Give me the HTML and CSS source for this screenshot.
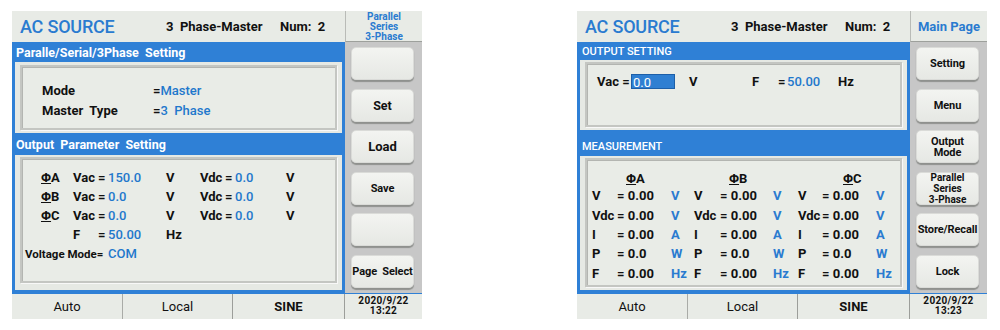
FILE: index.html
```html
<!DOCTYPE html>
<html lang="en">
<head>
  <meta charset="UTF-8">
  <title>AC Source - Panel Screens</title>
  <link rel="stylesheet" href="styles.css">
</head>
<body>
  <div class="screens">

    <!-- Parallel / Series / 3-Phase page -->
    <div class="panel">
      <div class="top">
        <span class="brand">AC SOURCE</span>
        <span class="mode">3&nbsp; Phase-Master</span>
        <span class="num">Num:&nbsp; 2</span>
      </div>
      <div class="side-top small">Parallel<br>Series<br>3-Phase</div>

      <div class="screen">
        <div class="sec-title">Paralle/Serial/3Phase&nbsp; Setting</div>
        <div class="sec-body sb-mode">
          <div class="inset grid-mode">
            <span class="lbl">Mode</span><span class="val"><b>=</b>Master</span>
            <span class="lbl">Master&nbsp; Type</span><span class="val"><b>=</b>3&nbsp; Phase</span>
          </div>
        </div>
        <div class="sec-title st-2">Output&nbsp; Parameter&nbsp; Setting</div>
        <div class="sec-body sb-param">
          <div class="inset grid-param">
            <span></span><span class="phi"><u>Φ</u>A</span><span class="lbl">Vac</span><span class="lbl">=</span><span class="val">150.0</span><span class="lbl">V</span><span class="lbl">Vdc</span><span class="lbl">=</span><span class="val">0.0</span><span class="lbl">V</span>
            <span></span><span class="phi"><u>Φ</u>B</span><span class="lbl">Vac</span><span class="lbl">=</span><span class="val">0.0</span><span class="lbl">V</span><span class="lbl">Vdc</span><span class="lbl">=</span><span class="val">0.0</span><span class="lbl">V</span>
            <span></span><span class="phi"><u>Φ</u>C</span><span class="lbl">Vac</span><span class="lbl">=</span><span class="val">0.0</span><span class="lbl">V</span><span class="lbl">Vdc</span><span class="lbl">=</span><span class="val">0.0</span><span class="lbl">V</span>
            <span></span><span></span><span class="lbl">F</span><span class="lbl">=</span><span class="val">50.00</span><span class="lbl">Hz</span><span class="fill"></span>
            <span class="lbl vmode">Voltage Mode=</span><span class="val">COM</span><span class="fill"></span>
          </div>
        </div>
      </div>

      <div class="side">
        <div class="btn"></div>
        <div class="btn">Set</div>
        <div class="btn big">Load</div>
        <div class="btn sm">Save</div>
        <div class="btn"></div>
        <div class="btn sm">Page&nbsp; Select</div>
      </div>

      <div class="foot">
        <span>Auto</span>
        <span>Local</span>
        <span class="bold">SINE</span>
      </div>
      <div class="side-foot">2020/9/22<br>13:22</div>
    </div>

    <!-- Main page -->
    <div class="panel">
      <div class="top">
        <span class="brand">AC SOURCE</span>
        <span class="mode">3&nbsp; Phase-Master</span>
        <span class="num">Num:&nbsp; 2</span>
      </div>
      <div class="side-top">Main Page</div>

      <div class="screen">
        <div class="sec-title caps">OUTPUT SETTING</div>
        <div class="sec-body sb-out">
          <div class="inset out-row">
            <span class="lbl w-vac">Vac =</span>
            <span class="input">0.0</span>
            <span class="lbl w-v">V</span>
            <span class="lbl w-f">F</span>
            <span class="lbl w-eq">=</span>
            <span class="val w-hz">50.00</span>
            <span class="lbl">Hz</span>
          </div>
        </div>
        <div class="sec-title caps st-meas">MEASUREMENT</div>
        <div class="sec-body sb-meas">
          <div class="inset grid-meas">
            <span></span><span class="phi ph-a"><u>Φ</u>A</span><span></span><span></span><span class="phi ph-b"><u>Φ</u>B</span><span></span><span></span><span class="phi ph-c"><u>Φ</u>C</span><span></span>

            <span class="lbl">V</span><span class="lbl">= 0.00</span><span class="unit">V</span><span class="lbl">V</span><span class="lbl">= 0.00</span><span class="unit">V</span><span class="lbl">V</span><span class="lbl">= 0.00</span><span class="unit">V</span>
            <span class="lbl">Vdc</span><span class="lbl">= 0.00</span><span class="unit">V</span><span class="lbl">Vdc</span><span class="lbl">= 0.00</span><span class="unit">V</span><span class="lbl">Vdc</span><span class="lbl">= 0.00</span><span class="unit">V</span>
            <span class="lbl">I</span><span class="lbl">= 0.00</span><span class="unit">A</span><span class="lbl">I</span><span class="lbl">= 0.00</span><span class="unit">A</span><span class="lbl">I</span><span class="lbl">= 0.00</span><span class="unit">A</span>
            <span class="lbl">P</span><span class="lbl">= 0.0</span><span class="unit">W</span><span class="lbl">P</span><span class="lbl">= 0.0</span><span class="unit">W</span><span class="lbl">P</span><span class="lbl">= 0.0</span><span class="unit">W</span>
            <span class="lbl">F</span><span class="lbl">= 0.00</span><span class="unit">Hz</span><span class="lbl">F</span><span class="lbl">= 0.00</span><span class="unit">Hz</span><span class="lbl">F</span><span class="lbl">= 0.00</span><span class="unit">Hz</span>
          </div>
        </div>
      </div>

      <div class="side">
        <div class="btn sm">Setting</div>
        <div class="btn sm">Menu</div>
        <div class="btn sm tight">Output<br>Mode</div>
        <div class="btn xs tight">Parallel<br>Series<br>3-Phase</div>
        <div class="btn sm">Store/Recall</div>
        <div class="btn sm">Lock</div>
      </div>

      <div class="foot">
        <span>Auto</span>
        <span>Local</span>
        <span class="bold">SINE</span>
      </div>
      <div class="side-foot">2020/9/22<br>13:23</div>
    </div>

  </div>
</body>
</html>
```

FILE: styles.css
```css
* {
  margin: 0;
  padding: 0;
  box-sizing: border-box;
}

body {
  font-family: Roboto, 'Liberation Sans', Arial, sans-serif;
  background: #ffffff;
  color: #111;
}

.screens {
  display: flex;
  gap: 155px;
  padding: 11px 0 0 12px;
}

.panel {
  display: grid;
  grid-template-columns: 333px 77px;
  grid-template-rows: 31px 251px 26px;
  width: 410px;
  background: #e8ebe6;
}

/* header row */
.top {
  display: flex;
  align-items: center;
  padding-left: 8px;
  background: #e8ebe6;
}

.brand {
  color: #2a7bd0;
  font-size: 18px;
  font-weight: 500;
  width: 146px;
  letter-spacing: -0.2px;
}

.mode {
  font-size: 13px;
  font-weight: 700;
  width: 114px;
}

.num {
  font-size: 13px;
  font-weight: 700;
}

.side-top {
  display: flex;
  align-items: center;
  justify-content: center;
  text-align: center;
  color: #2a7bd0;
  font-size: 13px;
  font-weight: 700;
  border-left: 1px solid #b9bbb7;
  border-bottom: 1px solid #9da09c;
  background: #e8ebe6;
}

.side-top.small {
  font-size: 10px;
  line-height: 10px;
  padding-top: 1px;
}

/* blue working area */
.screen {
  background: #2f80d6;
  padding: 0 3px 3px 3px;
  display: flex;
  flex-direction: column;
}

.sec-title {
  height: 20px;
  line-height: 21px;
  color: #fff;
  font-size: 12.5px;
  font-weight: 700;
  padding-left: 1px;
}

.sec-title.st-2 {
  height: 22px;
  line-height: 24px;
}

.sec-title.caps {
  font-size: 11px;
  font-weight: 500;
  padding-left: 2px;
  height: 18px;
  line-height: 20px;
}

.sec-title.st-meas {
  margin-top: 6px;
  height: 20px;
  line-height: 22px;
}

.sec-body {
  background: #e6e9e4;
  padding: 3px 5px;
}

.sb-mode { height: 71px; }
.sb-param { height: 135px; padding: 2px 5px 7px; }
.sb-out { height: 70px; padding: 2px 5px 3px; }
.sb-meas { flex: 1; padding: 2px 5px 3px; }

.inset {
  height: 100%;
  background: #e9ece7;
  border: 2px solid #c4c6c2;
  box-shadow: inset 1px 1px 0 #b3b5b1, 1px 1px 0 #f8f8f8;
}

.lbl {
  font-size: 13px;
  font-weight: 700;
  white-space: nowrap;
}

.val {
  font-size: 13px;
  font-weight: 500;
  color: #1f78cc;
  white-space: nowrap;
}

.val b {
  color: #111;
  font-weight: 700;
}

.unit {
  font-size: 13px;
  font-weight: 700;
  color: #2a7bd0;
}

.phi {
  font-size: 13px;
  font-weight: 700;
}

.phi u {
  text-decoration-thickness: 1px;
  text-underline-offset: 1px;
}

/* mode box */
.grid-mode {
  display: grid;
  grid-template-columns: 111px auto;
  grid-auto-rows: 20px;
  align-items: center;
  padding: 13px 0 0 20px;
}

/* output parameter box */
.grid-param {
  display: grid;
  grid-template-columns: 16px 32px 25px 10px 58px 34px 25px 10px 51px auto;
  grid-auto-rows: 19px;
  align-items: center;
  padding: 9px 0 0 3px;
}

.grid-param .fill {
  grid-column: span 4;
}

.grid-param .vmode {
  grid-column: span 4;
  font-size: 11.5px;
}

/* output setting row */
.out-row {
  display: flex;
  align-items: flex-start;
  padding: 10px 0 0 10px;
}

.w-vac { width: 34px; }
.w-v { width: 77px; padding-left: 14px; }
.w-f { width: 26px; }
.w-eq { width: 9px; }
.w-hz { width: 51px; }

.input {
  width: 44px;
  height: 15px;
  line-height: 15px;
  background: #2f7fd2;
  color: #fff;
  font-size: 13px;
  padding-left: 1px;
  border: 1px solid #1d5fa8;
}

/* measurement table */
.grid-meas {
  display: grid;
  grid-template-columns: 25px 54px 23px 26px 53px 25px 24px 54px auto;
  grid-template-rows: 15px;
  grid-auto-rows: 19.4px;
  align-items: center;
  padding: 11px 0 0 5px;
}

.ph-a { padding-left: 9px; }
.ph-b { padding-left: 9px; }
.ph-c { padding-left: 21px; }

/* soft key column */
.side {
  background: #c7c7c7;
  display: flex;
  flex-direction: column;
  gap: 8.6px;
  padding: 5px 8px 5px 6px;
}

.btn {
  height: 33px;
  border-radius: 5px;
  background: linear-gradient(#f3f4f1, #e6e8e4);
  border: 1px solid #dadbd8;
  box-shadow: 0 2px 1px #8f918e;
  display: flex;
  align-items: center;
  justify-content: center;
  text-align: center;
  font-size: 12.5px;
  font-weight: 700;
  white-space: nowrap;
}

.btn.big { font-size: 13px; }
.btn.sm { font-size: 11px; letter-spacing: -0.1px; }
.btn.xs { font-size: 10px; line-height: 9px; }
.btn.tight { line-height: 11px; }

/* status bar */
.foot {
  display: grid;
  grid-template-columns: 111px 110px 112px;
  border-top: 1px solid #2f80d6;
  background: #e8ebe6;
}

.foot span {
  display: flex;
  align-items: center;
  justify-content: center;
  font-size: 13px;
  border-right: 1px solid #9c9e9a;
}

.foot span:first-child {
  border-right-color: #a9aba7;
}

.foot .bold {
  font-weight: 700;
}

.side-foot {
  border-top: 1px solid #2f80d6;
  background: #e8ebe6;
  font-size: 10px;
  font-weight: 700;
  line-height: 10px;
  text-align: center;
  padding-top: 2px;
  letter-spacing: 0.3px;
}
```
